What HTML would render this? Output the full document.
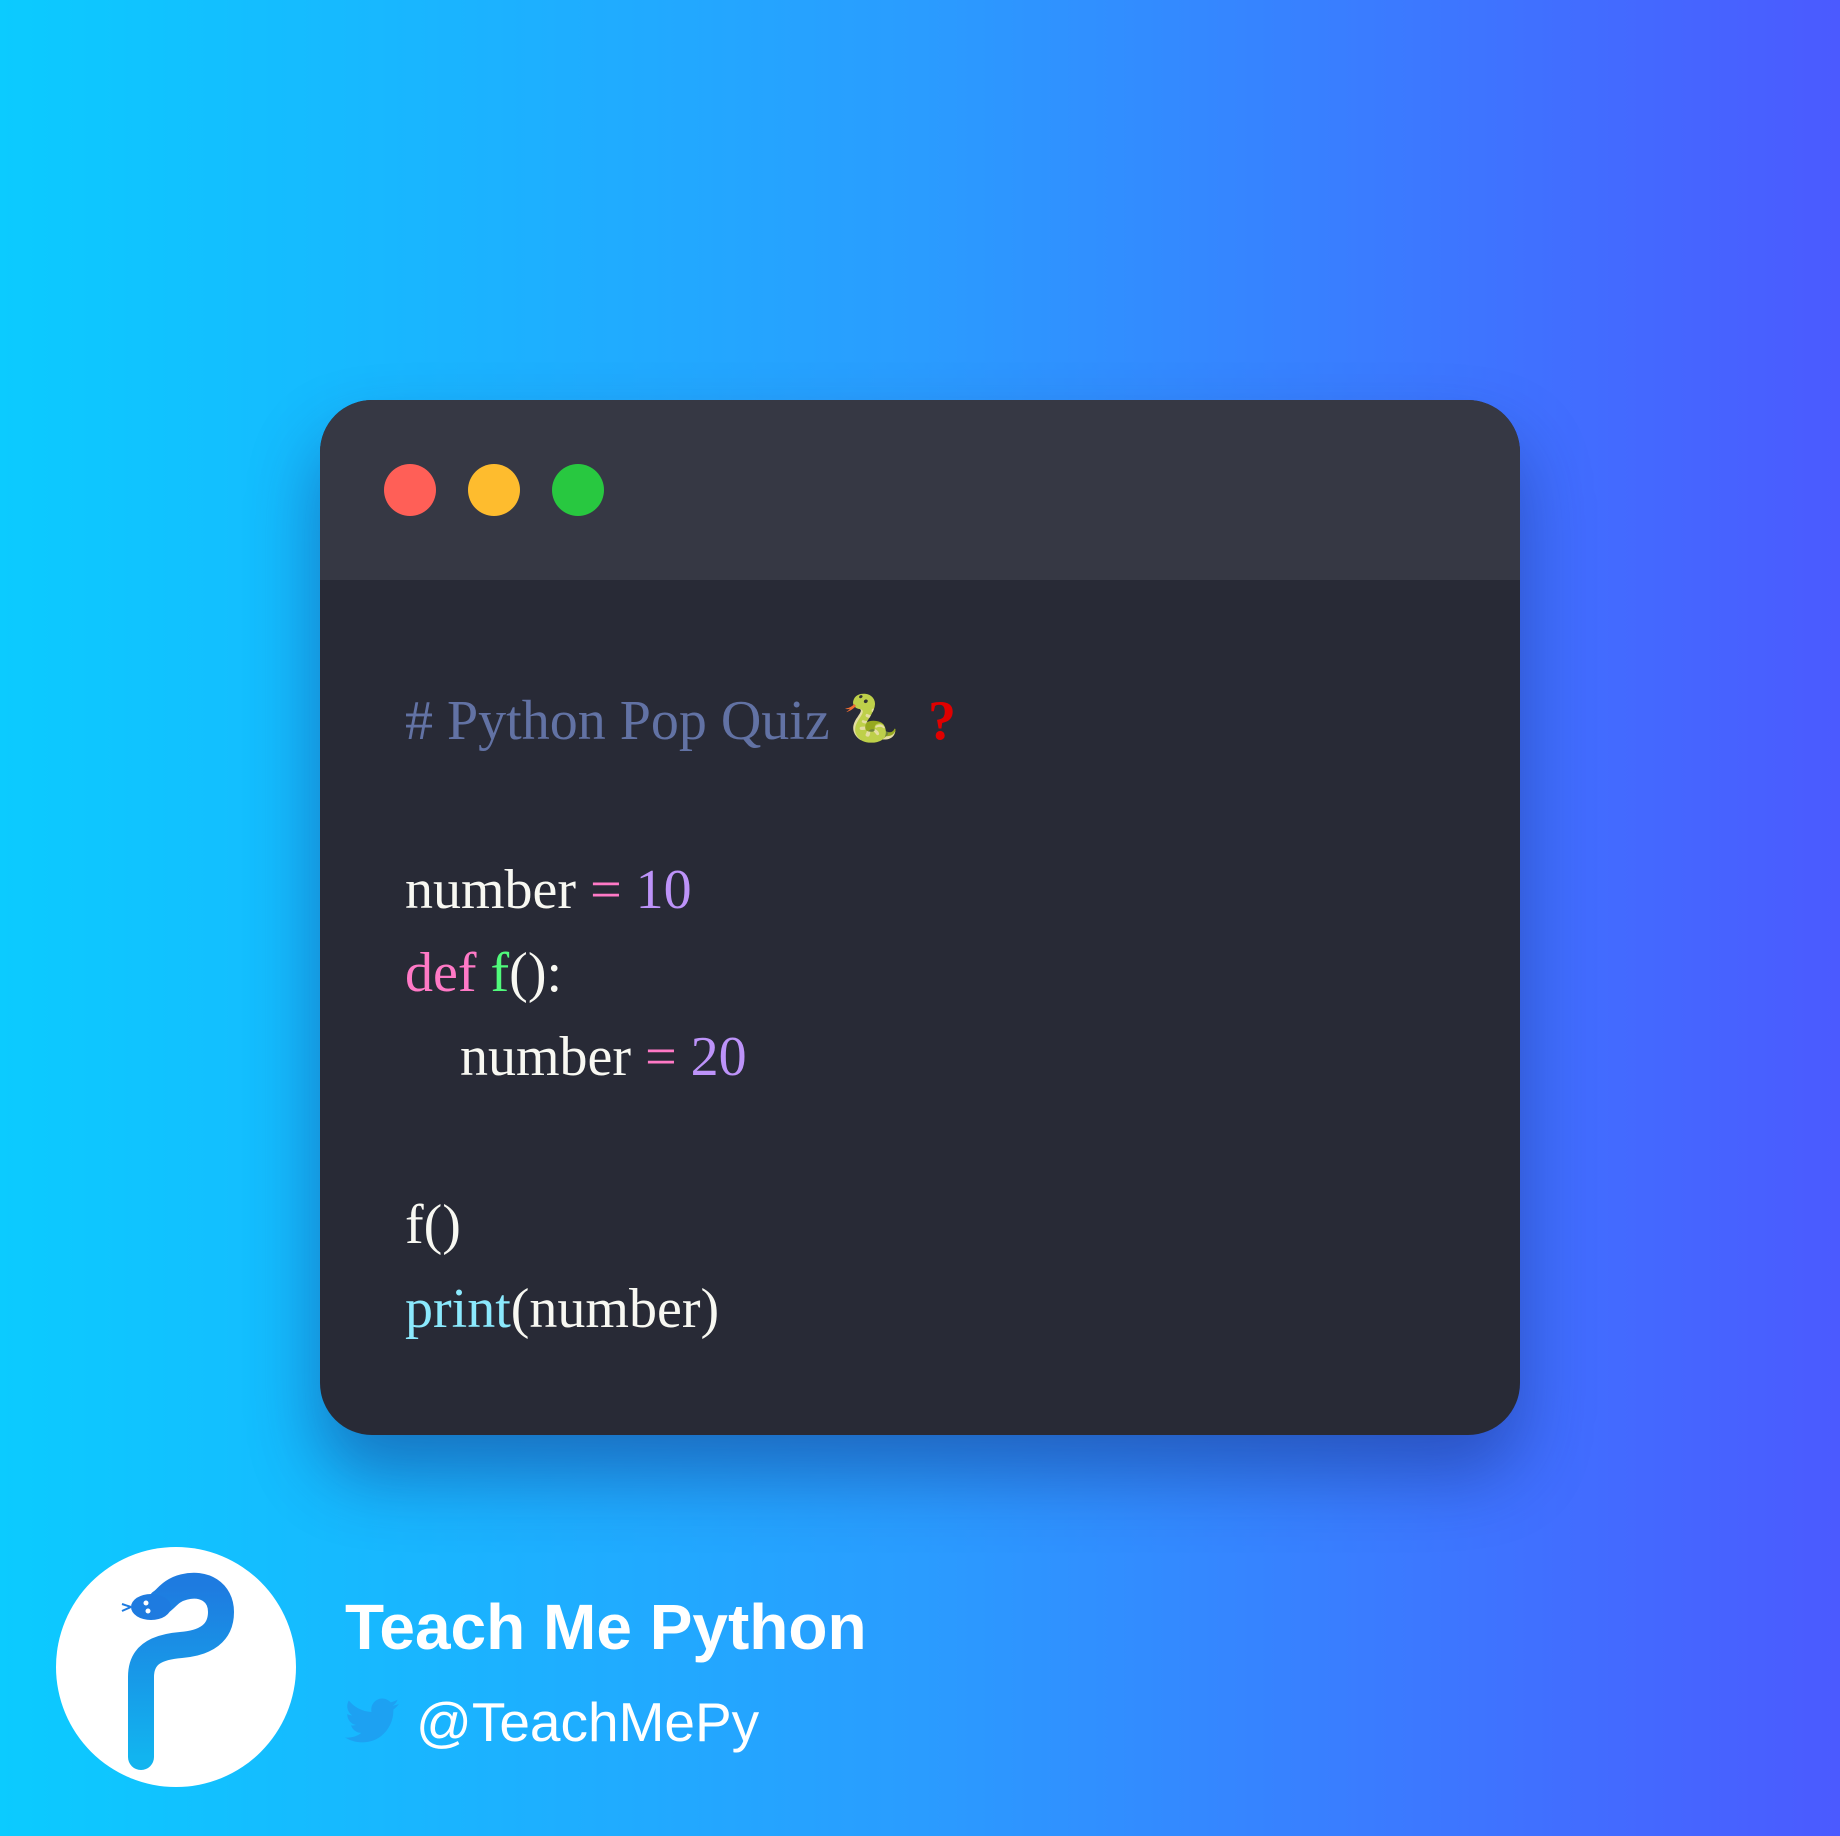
<!DOCTYPE html>
<html><head><meta charset="utf-8"><style>
html,body{margin:0;padding:0}
body{width:1840px;height:1836px;overflow:hidden;position:relative;background:linear-gradient(90deg,#0bcbff 0%,#2a9cff 50%,#4b5aff 100%);font-family:"Liberation Serif",serif}
.card{position:absolute;left:320px;top:400px;width:1200px;height:1035px;border-radius:52px;background:#282a36;overflow:hidden;box-shadow:0 40px 70px rgba(20,40,120,0.45)}
.hdr{position:absolute;left:0;top:0;width:1200px;height:180px;background:#363844}
.dot{position:absolute;top:64px;width:52px;height:52px;border-radius:50%}
.ln{position:absolute;left:85px;font-size:56px;line-height:1;white-space:nowrap;color:#f8f8f2}
.w{color:#f8f8f2}.p{color:#ff79c6}.v{color:#bd93f9}.g{color:#50fa7b}.c{color:#8be9fd}
.t1{position:absolute;left:345px;top:1590px;font:bold 64px "Liberation Sans",sans-serif;color:#fff;white-space:nowrap}
.t2{position:absolute;left:416px;top:1690px;font:55px "Liberation Sans",sans-serif;color:#fff;white-space:nowrap}
</style></head><body>
<div class="card">
<div class="hdr">
<div class="dot" style="left:64px;background:#ff5f57"></div>
<div class="dot" style="left:148px;background:#febc2e"></div>
<div class="dot" style="left:232px;background:#28c840"></div>
</div>
<div class="ln" style="top:293px;color:#6272a4">#&nbsp;Python Pop Quiz</div>
<div style="position:absolute;left:522px;top:296px;font-family:'Noto Color Emoji','DejaVu Sans',sans-serif;font-size:46px;line-height:1">🐍</div>
<div class="ln" style="top:293px;left:608px;color:#e00000;font-weight:bold">?</div>
<div class="ln" style="top:462px">number <span class="p">=</span> <span class="v">10</span></div>
<div class="ln" style="top:545px"><span class="p">def</span> <span class="g">f</span>():</div>
<div class="ln" style="top:629px;left:140px">number <span class="p">=</span> <span class="v">20</span></div>
<div class="ln" style="top:797px">f()</div>
<div class="ln" style="top:881px"><span class="c">print</span>(number)</div>
</div>
<div style="position:absolute;left:56px;top:1547px;width:240px;height:240px;border-radius:50%;background:#fff"></div>
<svg style="position:absolute;left:56px;top:1547px" width="240" height="240" viewBox="0 0 240 240">
<defs><linearGradient id="sg" x1="0" y1="0" x2="0" y2="1"><stop offset="0" stop-color="#1e7be0"/><stop offset="1" stop-color="#12b4ef"/></linearGradient></defs>
<path d="M85 210 L85 130 C85 108 100 100 125 98 C150 96 165 86 165 65 C165 45 148 35 128 40 C115 43 110 52 105 55" fill="none" stroke="url(#sg)" stroke-width="26" stroke-linecap="round"/>
<ellipse cx="95" cy="60" rx="20" ry="13" fill="#1e7be0"/>
<circle cx="90" cy="56" r="2.5" fill="#fff"/><circle cx="92" cy="64" r="2.5" fill="#fff"/>
<path d="M75 60 L66 57 M75 60 L66 64" stroke="#1e7be0" stroke-width="2"/>
</svg>
<div class="t1">Teach Me Python</div>
<svg style="position:absolute;left:345px;top:1698px" width="54" height="46" viewBox="0 0 24 20"><path fill="#1da1f2" d="M24 2.4c-.9.4-1.8.7-2.8.8 1-.6 1.800-1.6 2.2-2.7-1 .6-2 1-3.1 1.2C19.3.7 18 0 16.6 0c-2.7 0-4.9 2.2-4.9 4.9 0 .4 0 .8.1 1.1C7.7 5.8 4.1 3.9 1.7.9c-.4.7-.7 1.6-.7 2.5 0 1.7.9 3.2 2.2 4.1-.8 0-1.6-.2-2.2-.6v.1c0 2.4 1.7 4.4 3.9 4.8-.4.1-.8.2-1.3.2-.3 0-.6 0-.9-.1.6 2 2.4 3.4 4.6 3.4-1.7 1.3-3.8 2.1-6.1 2.1-.4 0-.8 0-1.2-.1 2.2 1.4 4.8 2.2 7.5 2.2 9.1 0 14-7.5 14-14v-.6c1-.7 1.8-1.6 2.5-2.5z"/></svg>
<div class="t2">@TeachMePy</div>
</body></html>
